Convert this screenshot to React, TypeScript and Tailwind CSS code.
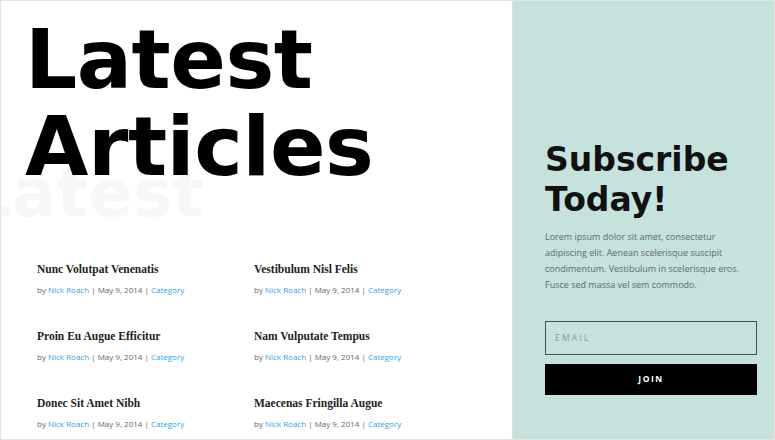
import React from 'react';

const articles = [
  'Nunc Volutpat Venenatis',
  'Vestibulum Nisl Felis',
  'Proin Eu Augue Efficitur',
  'Nam Vulputate Tempus',
  'Donec Sit Amet Nibh',
  'Maecenas Fringilla Augue',
];

const heading = { fontFamily: '"DejaVu Sans", "Liberation Sans", sans-serif' };
const serif = { fontFamily: '"Liberation Serif", "DejaVu Serif", serif' };
const body = { fontFamily: '"Open Sans", "Liberation Sans", sans-serif' };

const ArticleCard: React.FC<{ title: string }> = ({ title }) => (
  <div className="h-[67px]">
    <h3 className="text-[11.5px] font-bold leading-[16px] text-[#222]" style={serif}>
      {title}
    </h3>
    <p className="mt-[7px] text-[8px] leading-[12px] text-[#666]" style={body}>
      by <span className="text-[#2ea3f2]">Nick Roach</span> | May 9, 2014 | <span className="text-[#2ea3f2]">Category</span>
    </p>
  </div>
);

export default function App() {
  return (
    <div className="w-[775px] h-[440px] flex border border-[#e4e4e4] bg-white overflow-hidden">
      <div className="relative w-[512px] border-r border-[#e0e0e0] overflow-hidden">
        {/* faded backdrop word behind the heading */}
        <div
          className="absolute left-[-31px] top-[160px] text-[66px] font-bold leading-[66px] text-[#f7f7f7] select-none"
          style={heading}
          aria-hidden="true"
        >
          Latest
        </div>
        <div className="relative">
          <h1
            className="pl-[24px] pt-[15px] text-[82px] font-bold leading-[87px] tracking-[-0.5px] text-black"
            style={heading}
          >
            Latest
            <br />
            Articles
          </h1>
          <div className="mt-[71px] pl-[36px] grid grid-cols-[217px_217px]">
            {articles.map((t) => (
              <ArticleCard key={t} title={t} />
            ))}
          </div>
        </div>
      </div>
      <div className="flex-1 bg-[#c5e2dd] pl-[32px] pr-[17px] pt-[139px]">
        <h2 className="text-[33px] font-bold leading-[40px] text-[#111]" style={heading}>
          Subscribe
          <br />
          Today!
        </h2>
        <p className="mt-[9px] text-[9px] leading-[16px] text-[#5d6c69]" style={body}>
          Lorem ipsum dolor sit amet, consectetur adipiscing elit. Aenean scelerisque suscipit condimentum. Vestibulum in scelerisque eros. Fusce sed massa vel sem commodo.
        </p>
        <div
          className="mt-[28px] h-[34px] border border-[#3f5552] flex items-center pl-[9px] text-[8.5px] tracking-[2.2px] text-[#8a9896]"
          style={body}
        >
          EMAIL
        </div>
        <button
          className="mt-[9px] w-full h-[31px] bg-black text-white text-[8.5px] font-bold tracking-[1.5px]"
          style={body}
        >
          JOIN
        </button>
      </div>
    </div>
  );
}
